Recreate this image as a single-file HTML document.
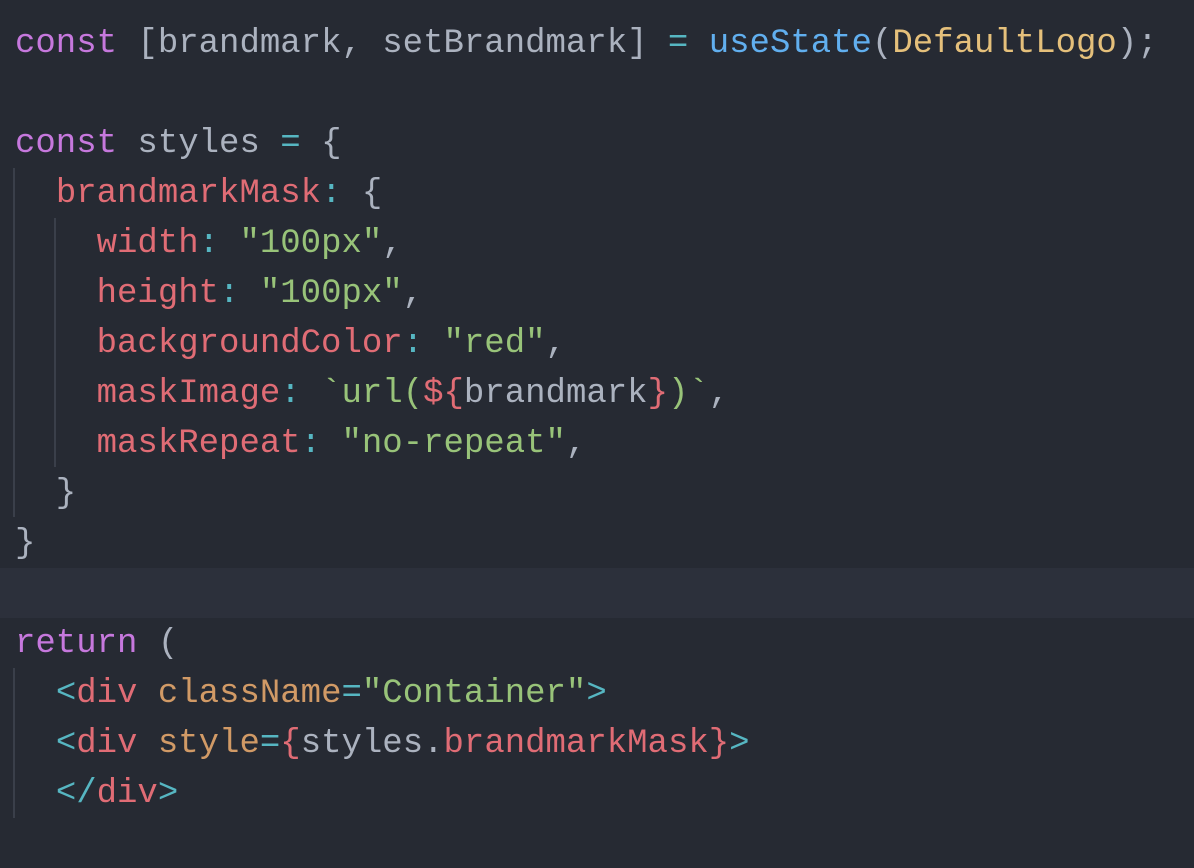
<!DOCTYPE html>
<html><head><style>
html,body{margin:0;padding:0;background:#262a33;width:1194px;height:868px;overflow:hidden}
.code{position:absolute;left:15px;top:19px;font-family:"Liberation Mono",monospace;font-size:34px;line-height:50px;color:#abb2bf;white-space:pre}
.hl{position:absolute;left:0;top:568px;width:1194px;height:50px;background:#2c303b}
.g{position:absolute;width:2px;background:#3a3f4a}
.k{color:#c678dd}.r{color:#e06c75}.s{color:#98c379}.f{color:#61afef}.y{color:#e5c07b}.c{color:#56b6c2}.o{color:#d19a66}
</style></head><body>
<div class="hl"></div>
<div class="g" style="left:13px;top:168px;height:349px"></div>
<div class="g" style="left:54px;top:218px;height:249px"></div>
<div class="g" style="left:13px;top:668px;height:150px"></div>
<div class="code"><span class="k">const</span> [brandmark, setBrandmark] <span class="c">=</span> <span class="f">useState</span>(<span class="y">DefaultLogo</span>);

<span class="k">const</span> styles <span class="c">=</span> {
  <span class="r">brandmarkMask</span><span class="c">:</span> {
    <span class="r">width</span><span class="c">:</span> <span class="s">"100px"</span>,
    <span class="r">height</span><span class="c">:</span> <span class="s">"100px"</span>,
    <span class="r">backgroundColor</span><span class="c">:</span> <span class="s">"red"</span>,
    <span class="r">maskImage</span><span class="c">:</span> <span class="s">`url(</span><span class="r">${</span>brandmark<span class="r">}</span><span class="s">)`</span>,
    <span class="r">maskRepeat</span><span class="c">:</span> <span class="s">"no-repeat"</span>,
  }
}

<span class="k">return</span> (
  <span class="c">&lt;</span><span class="r">div</span> <span class="o">className</span><span class="c">=</span><span class="s">"Container"</span><span class="c">&gt;</span>
  <span class="c">&lt;</span><span class="r">div</span> <span class="o">style</span><span class="c">=</span><span class="r">{</span>styles.<span class="r">brandmarkMask</span><span class="r">}</span><span class="c">&gt;</span>
  <span class="c">&lt;/</span><span class="r">div</span><span class="c">&gt;</span>
</div>
</body></html>
